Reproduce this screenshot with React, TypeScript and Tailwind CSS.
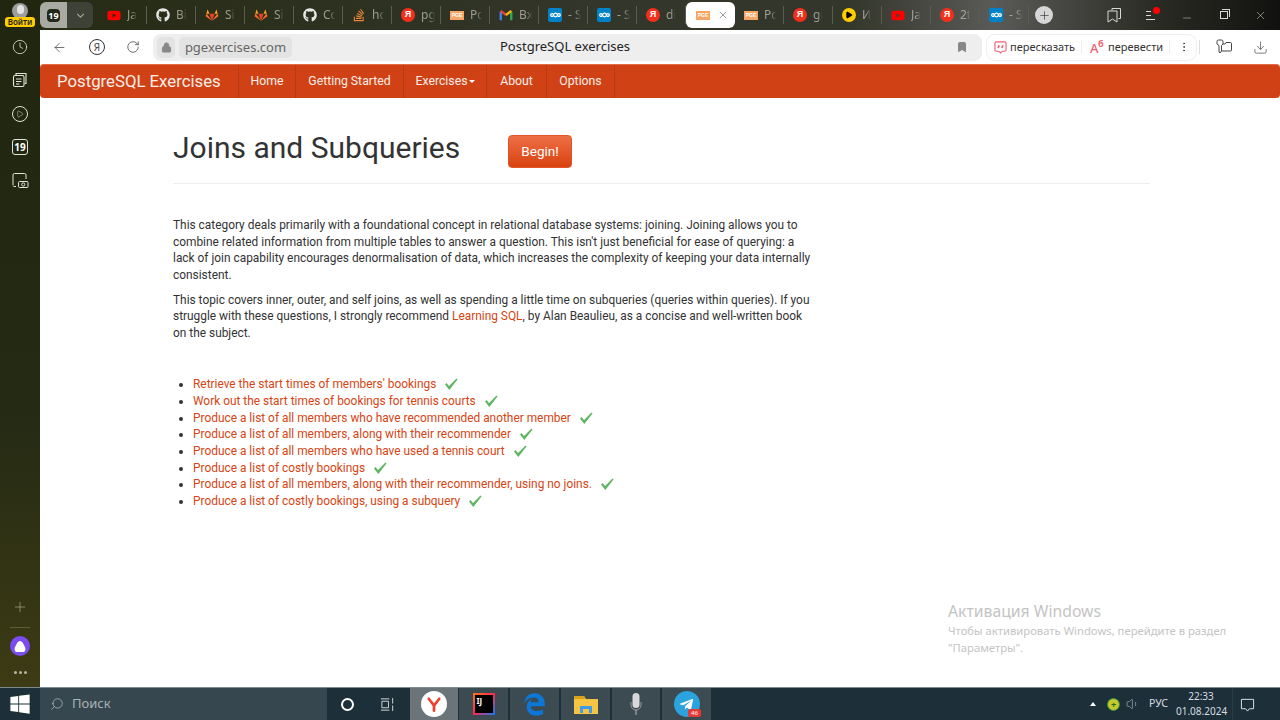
import React from 'react';
import {
  ArrowLeft,
  Bookmark,
  Clock,
  Download,
  EllipsisVertical,
  Lock,
  Minus,
  Play,
  Plus,
  RotateCw,
  Search,
  Volume1,
  X,
} from 'lucide-react';
import { FaGithub, FaTelegramPlane, FaWindows, FaEdgeLegacy, FaYoutube, FaStackOverflow } from 'react-icons/fa';

const YaIcon = () => (
  <div className="w-[14px] h-[14px] rounded-full bg-[#f0301c] text-white text-[9px] font-bold flex items-center justify-center font-['Liberation_Sans',sans-serif]">
    Я
  </div>
);

const PgIcon = () => (
  <div className="w-[14px] h-[9px] bg-[#f6a565] text-white text-[5px] font-bold leading-[9px] text-center font-['Liberation_Sans',sans-serif]">
    PGE
  </div>
);

const GitlabIcon = () => (
  <svg viewBox="0 0 24 24" className="w-[14px] h-[14px]">
    <path d="M12 22 1 14l2-4 9 12z" fill="#fc6d26" />
    <path d="M12 22 23 14l-2-4-9 12z" fill="#fc6d26" />
    <path d="M12 22 7.5 10h9L12 22z" fill="#e24329" />
    <path d="M1 14 4.500 2 7.500 10H3z" fill="#fca326" />
    <path d="M23 14 19.500 2 16.500 10H21z" fill="#fca326" />
  </svg>
);

const GmailIcon = () => (
  <svg viewBox="0 0 24 24" className="w-[14px] h-[14px]" fill="none" strokeWidth="4">
    <path d="M3 21V6" stroke="#4285f4" />
    <path d="M21 21V6" stroke="#34a853" />
    <path d="M3 5l9 7" stroke="#ea4335" />
    <path d="M21 5l-9 7" stroke="#fbbc04" />
  </svg>
);

const NextcloudIcon = () => (
  <div className="w-[14px] h-[14px] rounded-[2px] bg-[#0082c9] flex items-center justify-center">
    <svg viewBox="0 0 24 12" className="w-[11px] h-[6px]" fill="none" stroke="white" strokeWidth="2.6">
      <circle cx="4.500" cy="6" r="3" />
      <circle cx="12" cy="6" r="4" />
      <circle cx="19.500" cy="6" r="3" />
    </svg>
  </div>
);

const PlayBadge = () => (
  <div className="w-[14px] h-[14px] rounded-full bg-[#fc0] flex items-center justify-center">
    <Play size={8} className="text-black" fill="black" />
  </div>
);

// two pages with a bookmark cut, top right of the tab strip
const CollectionsIcon = () => (
  <svg viewBox="0 0 16 16" className="w-[16px] h-[16px]" fill="none" stroke="currentColor" strokeWidth="1">
    <path d="M6 3.500V1.500h8.500v10H12.500" />
    <path d="M2 4h9v11l-4.500-3L2 15z" />
  </svg>
);

const KeyFolderIcon = () => (
  <svg viewBox="0 0 16 16" className="w-[16px] h-[16px]" fill="none" stroke="#444" strokeWidth="1">
    <path d="M1 2.500a1.500 1.500 0 0 1 1.500-1.500h3a1.500 1.500 0 0 1 1.500 1.500V5l-1.500 1.500V12L4 14l-1-1V6.500L1 5z" />
    <path d="M7 5h2l1-1.500h4.500a1 1 0 0 1 1 1V11a1 1 0 0 1-1 1H6" />
  </svg>
);

const CheckMark = () => (
  <svg viewBox="0 0 14 14" className="inline-block w-[14px] h-[14px] ml-[8px] align-[-3px]">
    <path d="M1 7.500 2.500 6 5 9 12.500 1.500 13.500 2.500 5.300 13z" fill="#5fb662" />
  </svg>
);

const YoutubeIcon = () => <FaYoutube size={15} className="text-[#f00]" />;
const GithubIcon = () => <FaGithub size={14} className="text-[#e8e8e8]" />;
const SoIcon = () => <FaStackOverflow size={14} className="text-[#e8873a]" />;

const tabs: { icon: React.ReactNode; label: string; active?: boolean }[] = [
  { icon: <YoutubeIcon />, label: 'Ja' },
  { icon: <GithubIcon />, label: 'Bi' },
  { icon: <GitlabIcon />, label: 'Si' },
  { icon: <GitlabIcon />, label: 'Si' },
  { icon: <GithubIcon />, label: 'Cc' },
  { icon: <SoIcon />, label: 'hc' },
  { icon: <YaIcon />, label: 'pg' },
  { icon: <PgIcon />, label: 'Pc' },
  { icon: <GmailIcon />, label: 'Bx' },
  { icon: <NextcloudIcon />, label: '- S' },
  { icon: <NextcloudIcon />, label: '- S' },
  { icon: <YaIcon />, label: 'di' },
  { icon: <PgIcon />, label: '', active: true },
  { icon: <PgIcon />, label: 'Pc' },
  { icon: <YaIcon />, label: 'gi' },
  { icon: <PlayBadge />, label: 'И' },
  { icon: <YoutubeIcon />, label: 'Ja' },
  { icon: <YaIcon />, label: '2t' },
  { icon: <NextcloudIcon />, label: '- S' },
];

const exercises = [
  "Retrieve the start times of members' bookings",
  'Work out the start times of bookings for tennis courts',
  'Produce a list of all members who have recommended another member',
  'Produce a list of all members, along with their recommender',
  'Produce a list of all members who have used a tennis court',
  'Produce a list of costly bookings',
  'Produce a list of all members, along with their recommender, using no joins.',
  'Produce a list of costly bookings, using a subquery',
];

const navLinks = [
  { label: 'Home', width: 'w-[57px]' },
  { label: 'Getting Started', width: 'w-[108px]' },
  { label: 'Exercises', width: 'w-[83px]', caret: true },
  { label: 'About', width: 'w-[60px]' },
  { label: 'Options', width: 'w-[68px]' },
];

const Sidebar = () => (
  <div className="w-[40px] shrink-0 flex flex-col items-center text-[#e2e3da] bg-[linear-gradient(180deg,#20260f,#242a14_60%,#3d3b14)]">
    <div className="relative h-[30px] w-full flex justify-center pt-[3px]">
      <div className="w-[16px] h-[16px] rounded-full bg-[#9c9c9c] flex items-start justify-center overflow-hidden">
        <div className="w-[7px] h-[9px] mt-[2px] rounded-full bg-[#e2e2e2]" />
      </div>
      <div className="absolute top-[17px] left-[5px] w-[30px] h-[10px] rounded-[3px] bg-[#fc0] text-[#222] text-[8px] leading-[10px] text-center font-semibold">
        Войти
      </div>
    </div>
    <div className="h-[33px] flex items-center"><Clock size={16} strokeWidth={1.2} /></div>
    <div className="h-[34px] flex items-center">
      <svg viewBox="0 0 16 16" className="w-[16px] h-[16px]" fill="none" stroke="currentColor" strokeWidth="1.100">
        <path d="M4 3V1.500h10v10H12.500" />
        <rect x="1.500" y="3.500" width="10.500" height="11" rx="1.500" />
        <path d="M4 7h5.500M4 9.500h5.500M4 12h3.500" />
      </svg>
    </div>
    <div className="h-[33px] flex items-center">
      <div className="w-[16px] h-[16px] rounded-full border border-[#e2e3da] flex items-center justify-center">
        <Play size={8} strokeWidth={1.4} />
      </div>
    </div>
    <div className="h-[33px] flex items-center">
      <div className="w-[16px] h-[16px] rounded-[3px] border border-[#e2e3da] text-[10px] leading-none font-bold text-white flex items-center justify-center">
        19
      </div>
    </div>
    <div className="h-[33px] flex items-center">
      <svg viewBox="0 0 18 16" className="w-[18px] h-[16px]" fill="none" stroke="currentColor" strokeWidth="1">
        <path d="M2 13.500V3a1.500 1.500 0 0 1 1.500-1.500h10A1.500 1.500 0 0 1 15 3v4" />
        <path d="M2.500 14.500H5" />
        <rect x="7.500" y="9.500" width="9.500" height="6" rx="1" fill="#242a14" />
        <circle cx="12.250" cy="12.500" r="1.600" />
      </svg>
    </div>
    <div className="mt-auto flex flex-col items-center pb-[7px]">
      <Plus size={16} strokeWidth={1} className="text-[#a9a98e]" />
      <div className="w-[20px] h-px bg-[#5f5e3a] mt-[12px] mb-[8px]" />
      <div className="w-[20px] h-[20px] rounded-full bg-[#7b4cf0] flex items-center justify-center">
        <svg viewBox="0 0 12 11" className="w-[12px] h-[11px]"><path d="M6 0C8 0 9 2 11 6c1 3 0 5-2 5H3C1 11 0 9 1 6c2-4 3-6 5-6z" fill="white" /></svg>
      </div>
      <div className="flex gap-[2px] mt-[15px] mb-[6px]">
        <div className="w-[3px] h-[3px] rounded-full bg-[#b4b4a6]" />
        <div className="w-[3px] h-[3px] rounded-full bg-[#b4b4a6]" />
        <div className="w-[3px] h-[3px] rounded-full bg-[#b4b4a6]" />
      </div>
    </div>
  </div>
);

const TabStrip = () => (
  <div className="h-[30px] flex items-center text-[#c8c8c0] bg-[linear-gradient(90deg,#262b14,#33362a_45%,#33362a_65%,#5a5a58_77%,#2b2b25_90%,#11110f)]">
    <div className="w-[27px] h-[26px] rounded-l-[6px] bg-[#a9aaa2] flex items-center justify-center">
      <div className="w-[13px] h-[13px] rounded-[4px] bg-[#23261a] text-white text-[9px] leading-[13px] text-center font-bold">19</div>
    </div>
    <div className="w-[26px] h-[26px] rounded-r-[6px] bg-[#3e4136] flex items-center justify-center mr-[5px]">
      <svg viewBox="0 0 10 6" className="w-[9px] h-[5px]" fill="none" stroke="#a5a69c" strokeWidth="1.300"><path d="M1 1l4 4 4-4" /></svg>
    </div>
    {tabs.map((tab, i) =>
      tab.active ? (
        <div key={i} className="w-[49px] h-[26px] rounded-[6px] bg-white flex items-center pl-[10px] gap-[7px]">
          {tab.icon}
          <X size={12} strokeWidth={1.3} className="text-[#666]" />
        </div>
      ) : (
        <div key={i} className="w-[49px] h-[18px] flex items-center pl-[9px] gap-[6px] border-r border-[#5a5c4c]">
          <div className="w-[14px] shrink-0 flex justify-center">{tab.icon}</div>
          <span className="text-[12px] whitespace-nowrap opacity-70 [mask-image:linear-gradient(90deg,#000_50%,transparent_95%)]">{tab.label}</span>
        </div>
      ),
    )}
    <div className="w-[18px] h-[18px] ml-[6px] rounded-full bg-[#d6d6d6] flex items-center justify-center">
      <Plus size={13} strokeWidth={1.2} className="text-[#333]" />
    </div>
    <div className="ml-auto mr-[2px] flex items-center text-[#d8d8d8]">
      <div className="w-[37px] flex justify-center">
        <CollectionsIcon />
      </div>
      <div className="relative w-[37px] flex justify-center">
        <div className="w-[9px] flex flex-col gap-[3px]">
          <div className="h-px w-[5px] bg-[#d8d8d8]" />
          <div className="h-px w-[5px] bg-[#d8d8d8]" />
          <div className="h-px w-[9px] bg-[#d8d8d8]" />
        </div>
        <div className="absolute top-[-4px] left-[21px] w-[7px] h-[7px] rounded-full bg-[#f00]" />
      </div>
      <div className="w-[36px] flex justify-center"><Minus size={12} strokeWidth={1} className="mt-[6px]" /></div>
      <div className="w-[37px] flex justify-center">
        <div className="relative w-[8px] h-[8px] border border-[#d8d8d8]">
          <div className="absolute -top-[3px] -right-[3px] w-[8px] h-[8px] border-t border-r border-[#d8d8d8]" />
        </div>
      </div>
      <div className="w-[36px] flex justify-center"><X size={13} strokeWidth={1} /></div>
    </div>
  </div>
);

const Toolbar = () => (
  <div className="h-[34px] flex items-center bg-white rounded-t-[8px] text-[#444] font-['Noto_Sans',sans-serif]">
    <div className="w-[38px] flex justify-center"><ArrowLeft size={15} strokeWidth={1.2} /></div>
    <div className="w-[38px] flex justify-center">
      <div className="w-[16px] h-[16px] rounded-full border border-[#333] text-[10px] leading-[14px] text-center">Я</div>
    </div>
    <div className="w-[34px] flex justify-center"><RotateCw size={14} strokeWidth={1.3} /></div>
    <div className="ml-[3px] w-[829px] h-[27px] rounded-[8px] bg-[#eeeeee] flex items-center px-[4px]">
      <div className="w-[18px] h-[21px] rounded-[5px] bg-[#e3e3e3] flex items-center justify-center">
        <Lock size={11} className="text-[#888]" fill="#888" />
      </div>
      <div className="ml-[4px] w-[113px] h-[21px] rounded-[5px] bg-[#e3e3e3] text-[13px] leading-[21px] text-[#666] text-center">
        pgexercises.com
      </div>
      <div className="ml-[208px] text-[13px] text-[#222]">PostgreSQL exercises</div>
      <Bookmark size={12} className="ml-auto mr-[10px] text-[#888]" fill="#888" />
    </div>
    <div className="ml-[4px] w-[211px] h-[27px] rounded-[9px] border border-[#eeeeee] flex items-center text-[11px] text-[#333]">
      <svg viewBox="0 0 14 14" className="ml-[7px] w-[13px] h-[13px]" fill="none" stroke="#ef5f72" strokeWidth="1.200">
        <path d="M2.500 1h9A1.500 1.500 0 0 1 13 2.500v7a1.500 1.500 0 0 1-1.500 1.500H9l-2 2-2-2H2.500A1.500 1.500 0 0 1 1 9.500v-7A1.500 1.500 0 0 1 2.500 1z" />
        <path d="M5.500 4.500 4.500 7.500M9.500 4.500 8.500 7.500" strokeWidth="1.800" />
      </svg>
      <span className="ml-[3px] w-[64px] whitespace-nowrap">пересказать</span>
      <div className="w-px h-[14px] bg-[#eeeeee] ml-[7px]" />
      <span className="ml-[8px] w-[17px] relative h-[16px] text-[#ef5f72] leading-none">
        <span className="absolute left-0 bottom-0 text-[13px] font-medium">А</span>
        <span className="absolute left-[8px] top-0 text-[9px] font-bold">б</span>
      </span>
      <span className="ml-[1px] w-[54px] whitespace-nowrap">перевести</span>
      <div className="w-px h-[14px] bg-[#eeeeee] ml-[7px]" />
      <EllipsisVertical size={12} className="ml-[8px]" strokeWidth={1.5} />
    </div>
    <div className="w-px h-[14px] bg-[#dddddd] ml-[2px]" />
    <div className="w-[47px] flex justify-center">
      <KeyFolderIcon />
    </div>
    <div className="w-[27px] flex justify-center"><Download size={15} strokeWidth={1.1} /></div>
  </div>
);

const Navbar = () => (
  <div className="h-[34px] flex items-stretch bg-[#d04215] rounded-[4px] text-[#fbeee8] border-t border-[#e26a44] font-['Roboto',sans-serif]">
    <div className="w-[199px] pl-[17px] text-[16.750px] leading-[33px] border-r border-[#b83a12] whitespace-nowrap">
      PostgreSQL Exercises
    </div>
    {navLinks.map(link => (
      <div key={link.label} className={`${link.width} flex items-center justify-center text-[12.250px] border-r border-[#b83a12] whitespace-nowrap`}>
        {link.label}
        {link.caret && <span className="ml-[1px] border-x-[3px] border-t-[3px] border-x-transparent border-t-white" />}
      </div>
    ))}
  </div>
);

const Content = () => (
  <div className="flex-1 bg-white pl-[133px] pr-[130px] text-[11.900px] leading-[16.67px] text-[#333] font-['Roboto',sans-serif]">
    <div className="h-[86px] flex items-start border-b border-[#eeeeee]">
      <h1 className="mt-[31px] w-[335px] text-[30px] leading-[38px] text-[#333]">Joins and Subqueries</h1>
      <button className="mt-[37px] w-[64px] h-[33px] rounded-[4px] text-white text-[13.500px] bg-[linear-gradient(180deg,#ee6f46,#d9430f)] border border-[#e0552a]">
        Begin!
      </button>
    </div>
    <div className="w-[660px] mt-[33px]">
      <p>
        This category deals primarily with a foundational concept in relational database systems: joining. Joining allows you to<br />
        combine related information from multiple tables to answer a question. This isn't just beneficial for ease of querying: a<br />
        lack of join capability encourages denormalisation of data, which increases the complexity of keeping your data internally<br />
        consistent.
      </p>
      <p className="mt-[8px]">
        This topic covers inner, outer, and self joins, as well as spending a little time on subqueries (queries within queries). If you<br />
        struggle with these questions, I strongly recommend <span className="text-[#d64513]">Learning SQL</span>, by Alan Beaulieu, as a concise and well-written book<br />
        on the subject.
      </p>
    </div>
    <ul className="mt-[34.500px] pl-[20px] list-disc">
      {exercises.map(text => (
        <li key={text}>
          <span className="text-[#d64513]">{text}</span>
          <CheckMark />
        </li>
      ))}
    </ul>
  </div>
);

const YandexButton = () => (
  <div className="w-[26px] h-[26px] rounded-full bg-white flex items-center justify-center">
    <svg viewBox="0 0 24 24" className="w-[18px] h-[18px]" fill="none" stroke="#f0402c" strokeWidth="3.600" strokeLinecap="round">
      <path d="M5 5l7 9 7-9" />
      <path d="M12 14v7" />
    </svg>
  </div>
);

const Taskbar = () => (
  <div className="h-[33px] flex items-center bg-[#1d2f39] border-t border-[#7d8a90] text-[#d8dde0] font-['Noto_Sans',sans-serif]">
    <div className="w-[40px] flex justify-center"><FaWindows size={22} className="text-white" /></div>
    <div className="w-[287px] h-full bg-[#37474f] flex items-center pl-[10px] text-[#a9b3b8] text-[13px]">
      <Search size={14} strokeWidth={1.4} className="-scale-x-100" />
      <span className="ml-[8px]">Поиск</span>
    </div>
    <div className="w-[40px] flex justify-center">
      <div className="w-[13px] h-[13px] rounded-full border-[2.5px] border-white" />
    </div>
    <div className="w-[40px] flex justify-center">
      <svg viewBox="0 0 16 16" className="w-[15px] h-[15px]" fill="none" stroke="#d8dde0"><path d="M1 2h9M1 14h9M2 4.500h7v7H2zM13.500 1v6M13.500 9v6" /></svg>
    </div>
    <div className="ml-[3px] w-[49px] h-full bg-[#6a7479] flex items-center justify-center border-r border-[#1d2f39]"><YandexButton /></div>
    <div className="w-[51px] h-full bg-[#3c4a52] flex items-center justify-center border-r-2 border-[#1d2f39]">
      <div className="w-[22px] h-[22px] bg-[linear-gradient(135deg,#f97a12,#fe2857,#087cfa)] p-[2px]">
        <div className="w-full h-full bg-black text-white text-[8px] leading-[11px] font-bold pl-[2px]">IJ</div>
      </div>
    </div>
    <div className="w-[51px] h-full bg-[#3c4a52] flex items-center justify-center border-r-2 border-[#1d2f39]">
      <FaEdgeLegacy size={23} className="text-[#0b78d7]" />
    </div>
    <div className="w-[51px] h-full bg-[#3c4a52] flex items-center justify-center border-r-2 border-[#1d2f39]">
      <svg viewBox="0 0 24 20" className="w-[24px] h-[20px]">
        <path d="M0 2h10l2 3h12v15H0z" fill="#f5c443" />
        <path d="M0 2h10l2 3H0z" fill="#d9a21b" />
        <path d="M6 19v-7h12v7h-3v-4H9v4z" fill="#3f9be8" />
      </svg>
    </div>
    <div className="w-[50px] h-full bg-[#3c4a52] flex items-center justify-center border-r-2 border-[#1d2f39]">
      <svg viewBox="0 0 12 24" className="w-[12px] h-[24px]">
        <rect x="2.500" y="1" width="7" height="15" rx="3.500" fill="#d8d8d8" />
        <path d="M1 10v3a5 5 0 0 0 10 0v-3" fill="none" stroke="#999" />
        <path d="M6 18v5" stroke="#bbb" />
      </svg>
    </div>
    <div className="relative w-[49px] h-full bg-[#3c4a52] flex items-center justify-center">
      <div className="w-[26px] h-[26px] rounded-full bg-[#2ba3de] flex items-center justify-center">
        <FaTelegramPlane size={15} className="text-white -ml-[1px]" />
      </div>
      <div className="absolute right-[10px] bottom-[3px] w-[13px] h-[8px] rounded-[2px] bg-[#e53935] text-white text-[6px] leading-[8px] text-center">46</div>
    </div>
    <div className="ml-auto mr-[18px] flex items-center h-full">
      <div className="w-0 h-0 border-x-[3px] border-b-[4px] border-x-transparent border-b-white mr-[11px]" />
      <div className="w-[13px] h-[13px] rounded-full bg-[#c7c92a] border border-[#2f8f46] flex items-center justify-center text-[#176b2f] text-[9px] leading-none font-bold mr-[6px]">+</div>
      <Volume1 size={14} strokeWidth={1.2} className="text-[#a6afb4] mr-[9px]" />
      <span className="text-[10.500px] mr-[8px]">РУС</span>
      <div className="w-[50px] text-center text-[10px] leading-[15px] mr-[6px]">
        <div>22:33</div>
        <div className="whitespace-nowrap">01.08.2024</div>
      </div>
      <div className="w-[30px] h-full flex items-center justify-center border-l border-[#2b3c46]">
        <svg viewBox="0 0 16 16" className="w-[15px] h-[15px]" fill="none" stroke="#e6e9eb"><path d="M1.500 2.500h13v10H10L8 15l-2-2.500H1.500z" /></svg>
      </div>
    </div>
  </div>
);

export default function App() {
  return (
    <div className="relative w-[1280px] h-[720px] flex flex-col overflow-hidden font-['Noto_Sans',sans-serif]">
      <div className="flex-1 min-h-0 flex">
        <Sidebar />
        <div className="flex-1 min-w-0 flex flex-col">
          <TabStrip />
          <Toolbar />
          <Navbar />
          <Content />
        </div>
      </div>
      <Taskbar />
      <div className="absolute left-[948px] top-[601px] w-[282px] whitespace-nowrap text-[#c4c4c4] text-[11.250px] leading-[17px]">
        <div className="text-[15.750px] leading-[21px]">Активация Windows</div>
        <div>Чтобы активировать Windows, перейдите в раздел</div>
        <div>"Параметры".</div>
      </div>
    </div>
  );
}
